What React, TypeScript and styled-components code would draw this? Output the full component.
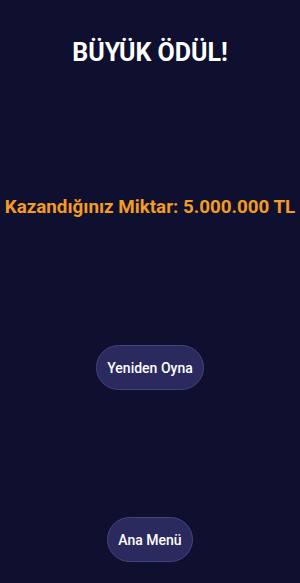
import React from 'react';
import styled, { createGlobalStyle } from 'styled-components';

const GlobalStyle = createGlobalStyle`
  html, body {
    margin: 0;
    padding: 0;
    background: #0f0f2f;
  }
  * {
    box-sizing: border-box;
  }
`;

const Screen = styled.div`
  height: 583px;
  display: flex;
  flex-direction: column;
  align-items: center;
  justify-content: space-between;
  padding: 37px 0 21px;
  background: #0f0f2f;
  font-family: Roboto, 'Noto Sans', sans-serif;
`;

const Title = styled.h1`
  margin: 0;
  color: #ffffff;
  font-size: 25px;
  font-weight: 700;
  line-height: 32px;
`;

const Prize = styled.div`
  color: #f39c1f;
  font-size: 18.8px;
  font-weight: 700;
  line-height: 22px;
`;

const MenuButton = styled.button`
  height: 45px;
  padding: 0 10px;
  border-radius: 23px;
  border: 1.5px solid #45437e;
  background: #2b2a5f;
  color: #ffffff;
  font-family: Roboto, 'Noto Sans', sans-serif;
  font-size: 14px;
  font-weight: 500;
  cursor: pointer;
`;

const App = () => {
  return (
    <>
      <GlobalStyle />
      <Screen>
        <Title>BÜYÜK ÖDÜL!</Title>
        <Prize>Kazandığınız Miktar: 5.000.000 TL</Prize>
        <MenuButton>Yeniden Oyna</MenuButton>
        <MenuButton>Ana Menü</MenuButton>
      </Screen>
    </>
  );
};

export default App;
